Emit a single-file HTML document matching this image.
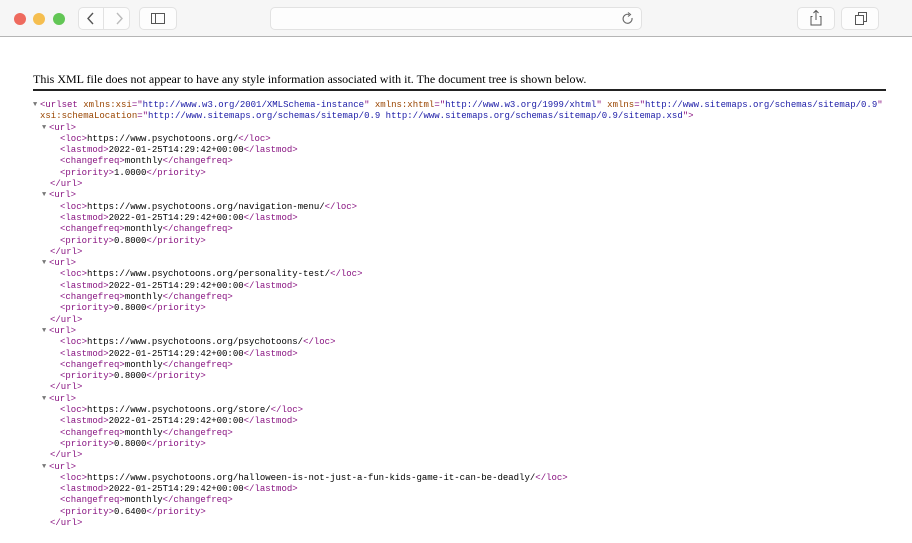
<!DOCTYPE html>
<html><head><style>
*{margin:0;padding:0;box-sizing:border-box}
body{width:912px;height:543px;background:#fff;overflow:hidden;position:relative;font-family:"Liberation Sans",sans-serif}
.bar{position:absolute;left:0;top:0;width:912px;height:37px;background:#f6f6f6;border-bottom:1px solid #b5b5b5}
.dot{position:absolute;top:13px;width:12px;height:12px;border-radius:50%}
.btn{position:absolute;top:7px;height:23px;background:#fdfdfd;border:1px solid #e2e2e2;border-radius:5px}
.hdr{position:absolute;left:33px;top:72px;font-family:"Liberation Serif",serif;font-size:12px;color:#000;white-space:nowrap}
.rule{position:absolute;left:33px;top:89px;width:853px;height:2px;background:#222}
.x{position:absolute;left:33px;top:100px;font-family:"Liberation Mono",monospace;font-size:9px;line-height:11.3px;color:#000}
.x div{position:relative;white-space:pre;height:11.3px}
.l0{padding-left:7px}.l1{padding-left:16px}.l2{padding-left:27px}.l3{padding-left:17px}
.ar{position:absolute;color:#777;font-size:7px}
.l0 .ar{left:0}.l1 .ar{left:9px}
.t{color:#881280}.a{color:#994500}.v{color:#1a1aa6}
</style></head><body>
<div class="bar">
<div class="dot" style="left:14px;background:#ee6a5e"></div>
<div class="dot" style="left:33px;background:#f5be4f"></div>
<div class="dot" style="left:53px;background:#62c655"></div>
<div class="btn" style="left:78px;width:52px"></div>
<div style="position:absolute;left:103px;top:7px;width:1px;height:23px;background:#e2e2e2"></div>
<svg style="position:absolute;left:78px;top:7px" width="52" height="23"><path d="M15 6 L10 11.5 L15 17" stroke="#555" stroke-width="1.4" fill="none"/><path d="M39 6 L44 11.5 L39 17" stroke="#bbb" stroke-width="1.4" fill="none"/></svg>
<div class="btn" style="left:139px;width:38px"></div>
<svg style="position:absolute;left:139px;top:7px" width="38" height="23"><rect x="12.5" y="6.5" width="13" height="10" stroke="#555" fill="none"/><line x1="16.5" y1="6.5" x2="16.5" y2="16.5" stroke="#555"/></svg>
<div class="btn" style="left:270px;width:372px"></div>
<svg style="position:absolute;left:620px;top:11px" width="16" height="16"><path d="M12 7 A4.5 4.5 0 1 1 9 3.5" stroke="#666" stroke-width="1.1" fill="none"/><path d="M8 1.5 L10.5 3.5 L8 5.5" stroke="#666" stroke-width="1.1" fill="none"/></svg>
<div class="btn" style="left:797px;width:38px"></div>
<svg style="position:absolute;left:797px;top:7px" width="38" height="23"><path d="M15.5 9.5 H14 V18 H24 V9.5 H22.5" stroke="#555" fill="none"/><path d="M19 3.5 V13 M16.5 6 L19 3.5 L21.5 6" stroke="#555" fill="none"/></svg>
<div class="btn" style="left:841px;width:38px"></div>
<svg style="position:absolute;left:841px;top:7px" width="38" height="23"><rect x="14.5" y="8.5" width="8" height="9" stroke="#555" fill="none"/><path d="M17.5 8.5 V5.5 H25.5 V14.5 H22.5" stroke="#555" fill="none"/></svg>
</div>
<div class="hdr">This XML file does not appear to have any style information associated with it. The document tree is shown below.</div>
<div class="rule"></div>
<div class="x"><div class="l0"><span class="ar">▼</span><span class="t">&lt;urlset</span> <span class="a">xmlns:xsi</span><span class="t">="</span><span class="v">http://www.w3.org/2001/XMLSchema-instance</span><span class="t">"</span> <span class="a">xmlns:xhtml</span><span class="t">="</span><span class="v">http://www.w3.org/1999/xhtml</span><span class="t">"</span> <span class="a">xmlns</span><span class="t">="</span><span class="v">http://www.sitemaps.org/schemas/sitemap/0.9</span><span class="t">"</span></div><div class="l0"><span class="a">xsi:schemaLocation</span><span class="t">="</span><span class="v">http://www.sitemaps.org/schemas/sitemap/0.9 http://www.sitemaps.org/schemas/sitemap/0.9/sitemap.xsd</span><span class="t">"&gt;</span></div><div class="l1"><span class="ar">▼</span><span class="t">&lt;url&gt;</span></div><div class="l2"><span class="t">&lt;loc&gt;</span>https://www.psychotoons.org/<span class="t">&lt;/loc&gt;</span></div><div class="l2"><span class="t">&lt;lastmod&gt;</span>2022-01-25T14:29:42+00:00<span class="t">&lt;/lastmod&gt;</span></div><div class="l2"><span class="t">&lt;changefreq&gt;</span>monthly<span class="t">&lt;/changefreq&gt;</span></div><div class="l2"><span class="t">&lt;priority&gt;</span>1.0000<span class="t">&lt;/priority&gt;</span></div><div class="l3"><span class="t">&lt;/url&gt;</span></div><div class="l1"><span class="ar">▼</span><span class="t">&lt;url&gt;</span></div><div class="l2"><span class="t">&lt;loc&gt;</span>https://www.psychotoons.org/navigation-menu/<span class="t">&lt;/loc&gt;</span></div><div class="l2"><span class="t">&lt;lastmod&gt;</span>2022-01-25T14:29:42+00:00<span class="t">&lt;/lastmod&gt;</span></div><div class="l2"><span class="t">&lt;changefreq&gt;</span>monthly<span class="t">&lt;/changefreq&gt;</span></div><div class="l2"><span class="t">&lt;priority&gt;</span>0.8000<span class="t">&lt;/priority&gt;</span></div><div class="l3"><span class="t">&lt;/url&gt;</span></div><div class="l1"><span class="ar">▼</span><span class="t">&lt;url&gt;</span></div><div class="l2"><span class="t">&lt;loc&gt;</span>https://www.psychotoons.org/personality-test/<span class="t">&lt;/loc&gt;</span></div><div class="l2"><span class="t">&lt;lastmod&gt;</span>2022-01-25T14:29:42+00:00<span class="t">&lt;/lastmod&gt;</span></div><div class="l2"><span class="t">&lt;changefreq&gt;</span>monthly<span class="t">&lt;/changefreq&gt;</span></div><div class="l2"><span class="t">&lt;priority&gt;</span>0.8000<span class="t">&lt;/priority&gt;</span></div><div class="l3"><span class="t">&lt;/url&gt;</span></div><div class="l1"><span class="ar">▼</span><span class="t">&lt;url&gt;</span></div><div class="l2"><span class="t">&lt;loc&gt;</span>https://www.psychotoons.org/psychotoons/<span class="t">&lt;/loc&gt;</span></div><div class="l2"><span class="t">&lt;lastmod&gt;</span>2022-01-25T14:29:42+00:00<span class="t">&lt;/lastmod&gt;</span></div><div class="l2"><span class="t">&lt;changefreq&gt;</span>monthly<span class="t">&lt;/changefreq&gt;</span></div><div class="l2"><span class="t">&lt;priority&gt;</span>0.8000<span class="t">&lt;/priority&gt;</span></div><div class="l3"><span class="t">&lt;/url&gt;</span></div><div class="l1"><span class="ar">▼</span><span class="t">&lt;url&gt;</span></div><div class="l2"><span class="t">&lt;loc&gt;</span>https://www.psychotoons.org/store/<span class="t">&lt;/loc&gt;</span></div><div class="l2"><span class="t">&lt;lastmod&gt;</span>2022-01-25T14:29:42+00:00<span class="t">&lt;/lastmod&gt;</span></div><div class="l2"><span class="t">&lt;changefreq&gt;</span>monthly<span class="t">&lt;/changefreq&gt;</span></div><div class="l2"><span class="t">&lt;priority&gt;</span>0.8000<span class="t">&lt;/priority&gt;</span></div><div class="l3"><span class="t">&lt;/url&gt;</span></div><div class="l1"><span class="ar">▼</span><span class="t">&lt;url&gt;</span></div><div class="l2"><span class="t">&lt;loc&gt;</span>https://www.psychotoons.org/halloween-is-not-just-a-fun-kids-game-it-can-be-deadly/<span class="t">&lt;/loc&gt;</span></div><div class="l2"><span class="t">&lt;lastmod&gt;</span>2022-01-25T14:29:42+00:00<span class="t">&lt;/lastmod&gt;</span></div><div class="l2"><span class="t">&lt;changefreq&gt;</span>monthly<span class="t">&lt;/changefreq&gt;</span></div><div class="l2"><span class="t">&lt;priority&gt;</span>0.6400<span class="t">&lt;/priority&gt;</span></div><div class="l3"><span class="t">&lt;/url&gt;</span></div></div>
</body></html>
